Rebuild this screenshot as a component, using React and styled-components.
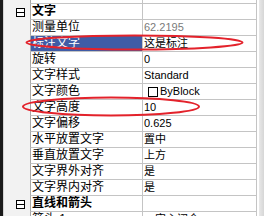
import React from 'react'
import styled, { createGlobalStyle } from 'styled-components'

const GlobalStyle = createGlobalStyle`
  html, body {
    margin: 0;
    padding: 0;
    background: #fff;
    overflow: hidden;
  }
`

const rows = [
  { name: '标注样式' },
  { cat: '文字' },
  { name: '测量单位', value: '62.2195', muted: true },
  { name: '标注文字', value: '这是标注', selected: true },
  { name: '旋转', value: '0' },
  { name: '文字样式', value: 'Standard' },
  { name: '文字颜色', value: 'ByBlock', swatch: true },
  { name: '文字高度', value: '10' },
  { name: '文字偏移', value: '0.625' },
  { name: '水平放置文字', value: '置中' },
  { name: '垂直放置文字', value: '上方' },
  { name: '文字界外对齐', value: '是' },
  { name: '文字界内对齐', value: '是' },
  { cat: '直线和箭头' },
  { name: '箭头 1', value: '实心闭合', arrow: true }
]

const CollapseBox = () => (
  <svg width="9" height="9" viewBox="0 0 9 9">
    <rect x="0.5" y="0.5" width="8" height="8" fill="#fff" stroke="#000" />
    <line x1="1" y1="4.5" x2="8" y2="4.5" stroke="#000" />
  </svg>
)

const ArrowIcon = () => (
  <svg width="9" height="9" viewBox="0 0 9 9">
    <line x1="0" y1="1.5" x2="9" y2="1.5" stroke="#000" />
    <path d="M1 5 L8 3 L8 7 Z" fill="#000" />
  </svg>
)

const App = () => {
  return (
    <>
      <GlobalStyle />
      <Frame>
        <EdgeStrip />
        <Grid>
          <List>
            {rows.map((row, i) =>
              row.cat ? (
                <Row key={i}>
                  <Gutter>
                    <CollapseBox />
                  </Gutter>
                  <NameCell category>{row.cat}</NameCell>
                  <ValueCell />
                </Row>
              ) : (
                <Row key={i}>
                  <Gutter />
                  <NameCell selected={row.selected}>{row.name}</NameCell>
                  <ValueCell muted={row.muted}>
                    {row.swatch && <Swatch />}
                    {row.arrow && (
                      <IconSlot>
                        <ArrowIcon />
                      </IconSlot>
                    )}
                    {row.value}
                  </ValueCell>
                </Row>
              )
            )}
          </List>
        </Grid>
        <Scrollbar />
        <Annotations width="264" height="216" viewBox="0 0 264 216">
          <ellipse cx="134.5" cy="42.5" rx="108" ry="7" />
          <ellipse cx="111" cy="106.5" rx="88" ry="9" />
        </Annotations>
      </Frame>
    </>
  )
}

const Frame = styled.div`
  position: relative;
  display: flex;
  width: 264px;
  height: 216px;
  overflow: hidden;
  background: #fff;
`

const EdgeStrip = styled.div`
  width: 3px;
  flex: none;
  background: #1a1a1a;
`

const Grid = styled.div`
  flex: none;
  width: 254px;
  overflow: hidden;
`

const List = styled.div`
  margin-top: -12px;
`

const Row = styled.div`
  display: grid;
  grid-template-columns: 27px 112px 115px;
  height: 16px;
`

const Gutter = styled.div`
  display: flex;
  align-items: center;
  justify-content: flex-end;
  padding-right: 5px;
  background: #f2f2f2;
  border-left: 1px solid #d4d4d4;
  box-sizing: border-box;
`

const NameCell = styled.div`
  box-sizing: border-box;
  border-left: 1px solid #a8a8a8;
  border-bottom: 1px solid #c4c4c4;
  padding: 0 0 0 1px;
  font-family: 'Liberation Sans', 'Noto Sans CJK SC', sans-serif;
  font-size: 12px;
  line-height: 15px;
  font-weight: ${p => (p.category ? 700 : 400)};
  white-space: nowrap;
  overflow: hidden;
  color: ${p => (p.selected ? '#fff' : '#000')};
  background: ${p => (p.selected ? '#3f5ca6' : '#fff')};
`

const ValueCell = styled.div`
  box-sizing: border-box;
  display: flex;
  align-items: center;
  border-left: 1px solid #c4c4c4;
  border-right: 1px solid #c4c4c4;
  border-bottom: 1px solid #c4c4c4;
  padding: 0 0 0 1px;
  font-family: 'Liberation Sans', 'Noto Sans CJK SC', sans-serif;
  font-size: 11px;
  line-height: 15px;
  white-space: nowrap;
  overflow: hidden;
  color: ${p => (p.muted ? '#7a7a7a' : '#000')};
`

const Swatch = styled.span`
  display: inline-block;
  width: 8px;
  height: 8px;
  margin: 1px 2px 0 4px;
  border: 1px solid #000;
  background: #fff;
`

const IconSlot = styled.span`
  display: inline-flex;
  margin-right: 2px;
`

const Scrollbar = styled.div`
  flex: none;
  width: 7px;
  background: linear-gradient(to right, #fff 0 2px, #e8e8e8 2px, #d6d6d6 100%);
`

const Annotations = styled.svg`
  position: absolute;
  left: 0;
  top: 0;
  pointer-events: none;
  ellipse {
    fill: none;
    stroke: #e3222b;
    stroke-width: 2;
  }
`

export default App
